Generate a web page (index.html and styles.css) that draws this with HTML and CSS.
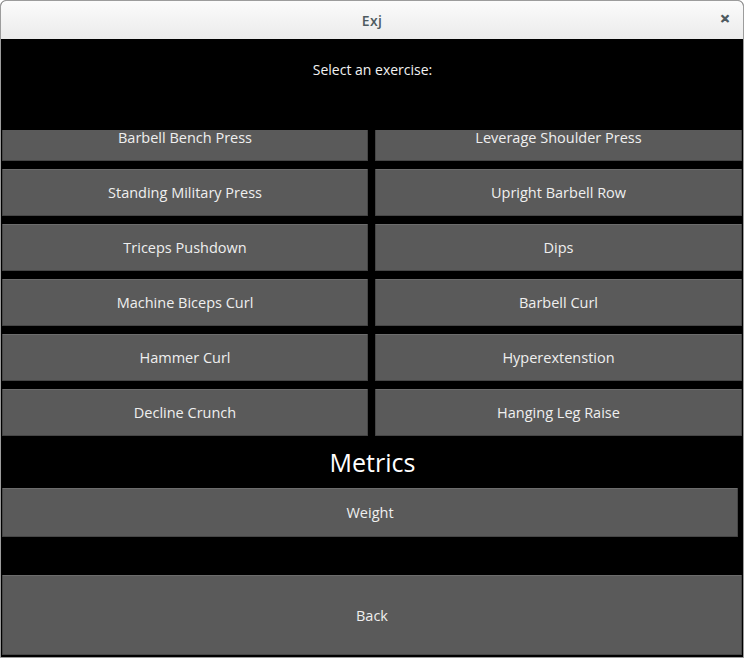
FILE: index.html
```html
<!DOCTYPE html>
<html>
<head>
<meta charset="utf-8">
<title>Exj</title>
<link rel="stylesheet" href="styles.css">
</head>
<body>
<div class="window">
  <div class="titlebar">
    <span class="title">Exj</span>
    <span class="close">&#x2715;</span>
  </div>
  <div class="content">
    <div class="prompt">Select an exercise:</div>
    <div class="viewport">
      <div class="grid">
        <button class="btn">Barbell Bench Press</button>
        <button class="btn">Leverage Shoulder Press</button>
        <button class="btn">Standing Military Press</button>
        <button class="btn">Upright Barbell Row</button>
        <button class="btn">Triceps Pushdown</button>
        <button class="btn">Dips</button>
        <button class="btn">Machine Biceps Curl</button>
        <button class="btn">Barbell Curl</button>
        <button class="btn">Hammer Curl</button>
        <button class="btn">Hyperextenstion</button>
        <button class="btn">Decline Crunch</button>
        <button class="btn">Hanging Leg Raise</button>
      </div>
    </div>
    <div class="metrics">Metrics</div>
    <div class="weight-row"><button class="btn weight">Weight</button></div>
    <div class="spacer"></div>
    <button class="btn back">Back</button>
  </div>
</div>
</body>
</html>
```
FILE: styles.css
```css
* { box-sizing: border-box; }
html, body { margin: 0; padding: 0; background: #ffffff; }
body { width: 744px; height: 658px; font-family: "Open Sans", "Noto Sans", sans-serif; }
.window {
  width: 744px;
  height: 658px;
  border: 1px solid #9c9c9c;
  border-radius: 6px 6px 0 0;
  overflow: hidden;
  display: flex;
  flex-direction: column;
  background: #000;
}
.titlebar {
  height: 38px;
  flex: none;
  background: linear-gradient(#fbfbfb, #ebebeb);
  display: flex;
  align-items: center;
  justify-content: center;
  position: relative;
}
.title {
  font-family: "Open Sans", "Noto Sans", sans-serif;
  font-size: 14px;
  font-weight: 600;
  color: #4e5a60;
  letter-spacing: 0.3px;
}
.close {
  position: absolute;
  right: 13px;
  top: 11px;
  font-size: 12px;
  font-weight: 900;
  color: #4e5a60;
  font-family: "DejaVu Sans", sans-serif;
  -webkit-text-stroke: 1px #4e5a60;
}
.content {
  flex: 1;
  background: #000;
  display: flex;
  flex-direction: column;
  padding: 0 0 1px 1px;
}
.prompt {
  height: 91px;
  flex: none;
  color: #f2f2f2;
  font-size: 14px;
  text-align: center;
  padding-top: 21px;
}
.viewport {
  height: 307px;
  flex: none;
  overflow: hidden;
}
.grid {
  margin-top: -16px;
  display: grid;
  grid-template-columns: 366px 367px;
  grid-auto-rows: 47px;
  column-gap: 7px;
  row-gap: 8px;
}
.btn {
  background: #5a5a5a;
  border: 1px solid #464646;
  border-top-color: #6c6c6c;
  border-radius: 1px;
  color: #efefef;
  font-family: "Open Sans", "Noto Sans", sans-serif;
  font-size: 14.5px;
  padding: 0;
  margin: 0;
}
.metrics {
  height: 51px;
  flex: none;
  color: #ffffff;
  font-size: 25px;
  text-align: center;
  line-height: 51px;
}
.weight-row {
  height: 49px;
  flex: none;
}
.weight {
  width: 736px;
  height: 49px;
}
.spacer { height: 38px; flex: none; }
.back {
  height: 80px;
  width: 740px;
  flex: none;
}
```
